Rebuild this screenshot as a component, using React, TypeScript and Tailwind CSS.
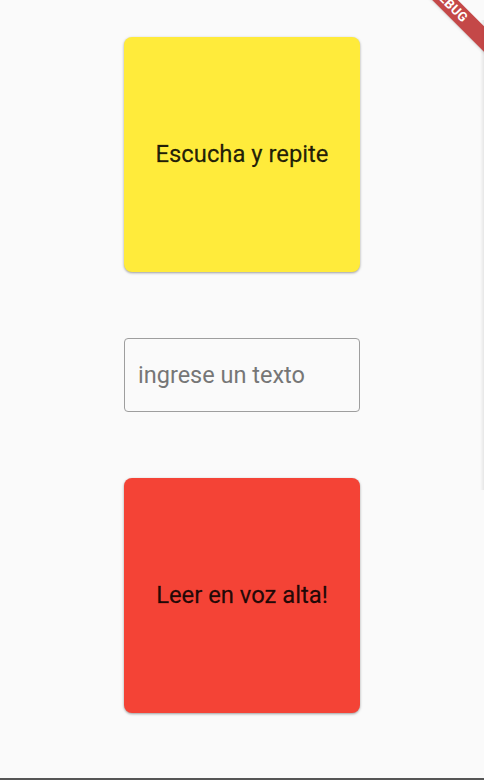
import React, { useState } from "react";

const ActionCard: React.FC<{ label: string; className: string }> = ({ label, className }) => (
  <button
    type="button"
    className={`flex h-[235px] w-[236px] items-center justify-center rounded-[8px] shadow-[0_1px_3px_rgba(0,0,0,0.25),0_1px_2px_rgba(0,0,0,0.15)] ${className}`}
  >
    <span className="text-[23.8px] font-normal leading-none text-black/[0.87] [-webkit-text-stroke:0.3px_rgba(0,0,0,0.6)]">
      {label}
    </span>
  </button>
);

export default function App() {
  const [text, setText] = useState("");

  return (
    <div
      className="relative h-[780px] w-[484px] overflow-hidden bg-[#fafafa]"
      style={{ fontFamily: "Roboto, 'Noto Sans', sans-serif" }}
    >
      <div className="flex flex-col items-center pt-[37px] gap-[66px]">
        <ActionCard label="Escucha y repite" className="bg-[#ffeb3b]" />

        <input
          value={text}
          onChange={(e) => setText(e.target.value)}
          placeholder="ingrese un texto"
          className="h-[74px] w-[236px] rounded-[4px] border border-[#9e9e9e] bg-transparent pl-[13px] text-[23.5px] text-black/[0.87] outline-none placeholder:text-[#767676]"
        />

        <ActionCard label="Leer en voz alta!" className="bg-[#f44336]" />
      </div>

      {/* right edge shade */}
      <div className="absolute right-0 top-[20px] h-[470px] w-[4px] bg-gradient-to-r from-transparent to-black/[0.08]" />

      {/* debug banner */}
      <div className="pointer-events-none absolute left-[380px] top-[-4px] h-[18px] w-[140px] rotate-45 bg-[#b71c1c]/[0.8] text-center text-[13px] font-bold leading-[18px] tracking-wide text-white shadow-sm">
        DEBUG
      </div>

      {/* bottom line */}
      <div className="absolute bottom-0 left-0 h-[2px] w-full bg-[#555555]" />
    </div>
  );
}
